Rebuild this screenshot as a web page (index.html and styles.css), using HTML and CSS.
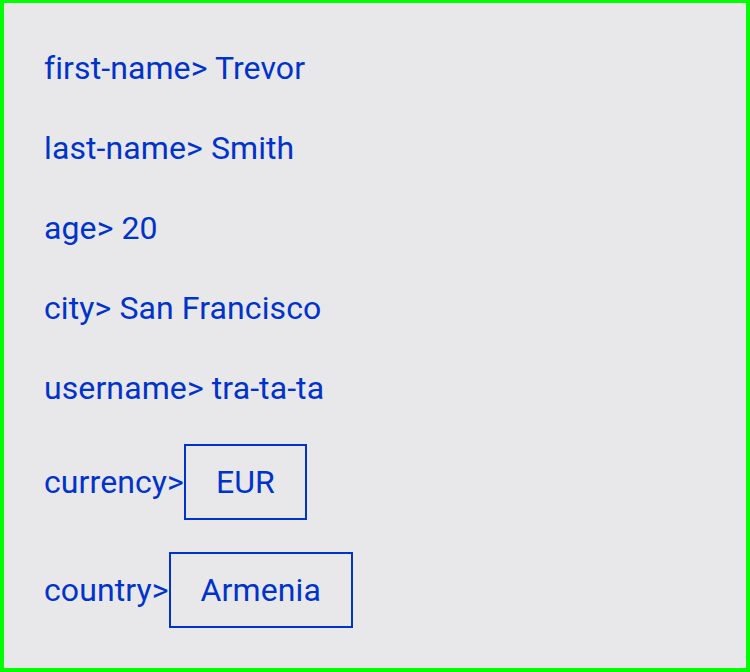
FILE: index.html
```html
<!DOCTYPE html>
<html>
<head>
<meta charset="utf-8">
<link rel="stylesheet" href="styles.css">
</head>
<body>
<div class="panel">
  <div class="row">first-name&gt; Trevor</div>
  <div class="row">last-name&gt; Smith</div>
  <div class="row">age&gt; 20</div>
  <div class="row">city&gt; San Francisco</div>
  <div class="row">username&gt; tra-ta-ta</div>
  <div class="row">currency&gt;<span class="box">EUR</span></div>
  <div class="row">country&gt;<span class="box">Armenia</span></div>
</div>
</body>
</html>
```
FILE: styles.css
```css
html, body {
  margin: 0;
  padding: 0;
  height: 100%;
}
.panel {
  box-sizing: border-box;
  min-height: 100vh;
  border: 4px solid #00ff00;
  border-top-width: 3px;
  background: #e8e8ea;
  padding: 25px 40px 24px;
  font-family: Roboto, "Liberation Sans", sans-serif;
  font-size: 32px;
  line-height: 48px;
  letter-spacing: 0.1px;
  color: #0033cc;
}
.row {
  padding: 16px 0;
  white-space: nowrap;
}
.box {
  display: inline-block;
  border: 2px solid #0033cc;
  padding: 12px 30px;
  line-height: 48px;
  letter-spacing: 0.1px;
}
```
